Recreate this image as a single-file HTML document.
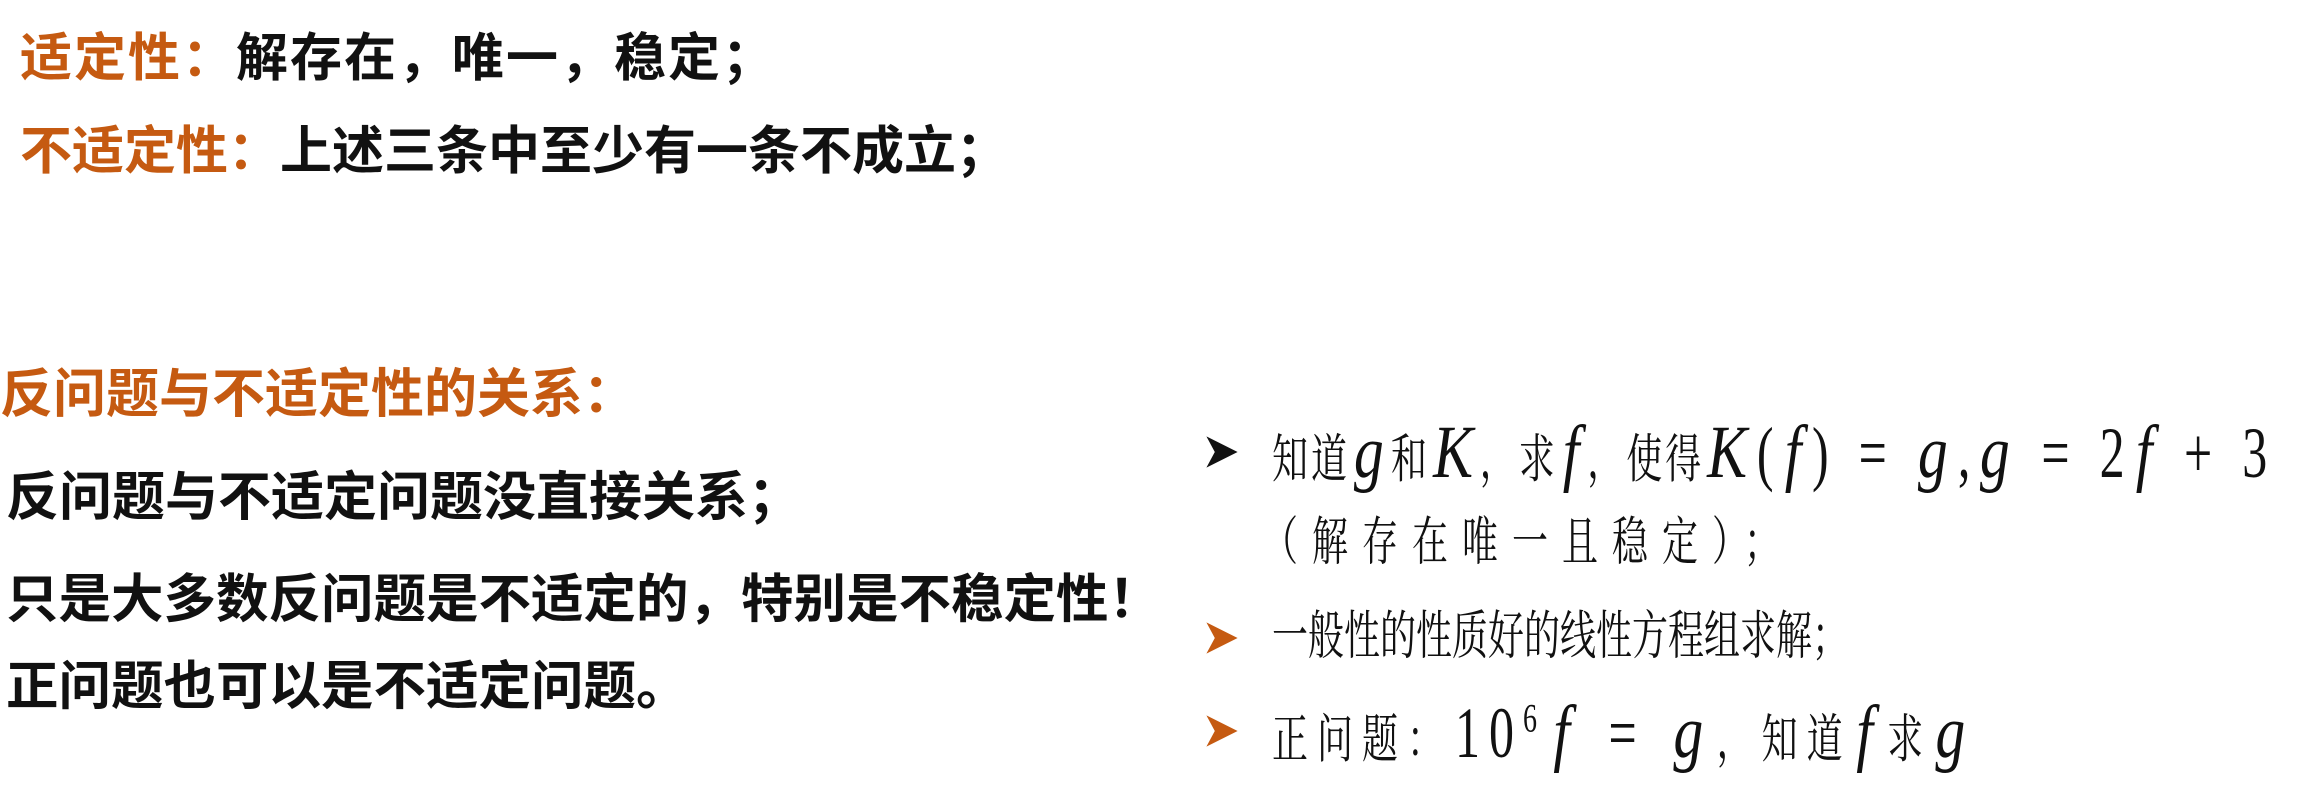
<!DOCTYPE html>
<html><head><meta charset="utf-8"><style>
html,body{margin:0;padding:0;background:#fff;width:2307px;height:786px;overflow:hidden;position:relative}
.t{position:absolute;white-space:nowrap;font-family:"Liberation Sans","Noto Sans CJK SC",sans-serif;font-weight:bold;color:#111;line-height:1}
.o{color:#C55A11}
.r{position:absolute;white-space:nowrap;font-family:"Liberation Serif","Noto Serif CJK SC",serif;font-size:36px;line-height:1;color:#111;transform:scaleY(1.45);transform-origin:left center}
.r i{font-family:"Liberation Serif",serif;font-style:italic;font-size:52px;padding:0 6px;display:inline-block;transform:scaleX(1.15)}
.r b{font-weight:normal;font-size:50px;padding:0 24px}
.r span.n{font-size:50px;padding:0 3px}
.ar{position:absolute;left:1204px;width:36px;height:36px}
</style></head><body>
<div class="t" style="left:20px;top:33px;font-size:52px;letter-spacing:2px"><span class="o">适定性：</span>解存在，唯一，稳定；</div>
<div class="t" style="left:20px;top:126px;font-size:52px"><span class="o">不适定性：</span>上述三条中至少有一条不成立；</div>
<div class="t o" style="left:0;top:368px;font-size:53px">反问题与不适定性的关系：</div>
<div class="t" style="left:6px;top:471px;font-size:53px">反问题与不适定问题没直接关系；</div>
<div class="t" style="left:6px;top:574px;font-size:52.5px">只是大多数反问题是不适定的，特别是不稳定性！</div>
<div class="t" style="left:6px;top:661px;font-size:52.5px">正问题也可以是不适定问题。</div>

<svg class="ar" style="top:434px" viewBox="0 0 30 30"><path d="M2 2 L28 15 L2 28 L9 15 Z" fill="#111"/></svg>
<svg class="ar" style="top:620px" viewBox="0 0 30 30"><path d="M2 2 L28 15 L2 28 L9 15 Z" fill="#C55A11"/></svg>
<svg class="ar" style="top:713px" viewBox="0 0 30 30"><path d="M2 2 L28 15 L2 28 L9 15 Z" fill="#C55A11"/></svg>

<div class="r" style="left:1272px;top:428px;letter-spacing:3px">知道<i>g</i>和<i>K</i>，求<i>f</i>，使得<i>K</i><span class="n">(</span><i>f</i><span class="n">)</span><b>=</b><i>g</i><span class="n">,</span><i>g</i><b>=</b><span class="n">2</span><i>f</i><b>+</b><span class="n">3</span></div>
<div class="r o" style="left:1262px;top:524px;letter-spacing:14px">（解存在唯一且稳定）；</div>
<div class="r o" style="left:1272px;top:618px">一般性的性质好的线性方程组求解；</div>
<div class="r o" style="left:1272px;top:708px;letter-spacing:9px">正问题：<span class="n">10<sup style="font-size:28px">6</sup></span><i>f</i><b>=</b><i>g</i>，知道<i>f</i>求<i>g</i></div>
</body></html>
